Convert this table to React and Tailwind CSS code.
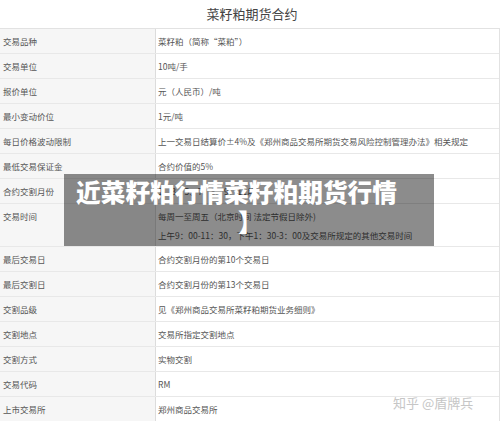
const rows = [
    { label: "交易品种", value: ["菜籽粕（简称“菜粕”）"] },
    { label: "交易单位", value: ["10吨/手"] },
    { label: "报价单位", value: ["元（人民币）/吨"] },
    { label: "最小变动价位", value: ["1元/吨"] },
    {
        label: "每日价格波动限制",
        value: ["上一交易日结算价±4%及《郑州商品交易所期货交易风险控制管理办法》相关规定"],
    },
    { label: "最低交易保证金", value: ["合约价值的5%"] },
    { label: "合约交割月份", value: ["1、3、5、7、8、9、11月"] },
    {
        label: "交易时间",
        value: [
            "每周一至周五（北京时间 法定节假日除外)",
            "上午9：00-11：30，下午1：30-3：00及交易所规定的其他交易时间",
        ],
        tall: true,
    },
    { label: "最后交易日", value: ["合约交割月份的第10个交易日"] },
    { label: "最后交割日", value: ["合约交割月份的第13个交易日"] },
    { label: "交割品级", value: ["见《郑州商品交易所菜籽粕期货业务细则》"] },
    { label: "交割地点", value: ["交易所指定交割地点"] },
    { label: "交割方式", value: ["实物交割"] },
    { label: "交易代码", value: ["RM"] },
    { label: "上市交易所", value: ["郑州商品交易所"] },
];

const font = { fontFamily: '"Noto Sans CJK SC", "Noto Sans", sans-serif' };

const Row = ({ row }) => (
    <div
        className={`grid grid-cols-[156px_1fr] border-b border-[#e8e8e8] ${
            row.tall ? "h-[43px]" : "h-[25px]"
        }`}
    >
        <div
            className={`bg-[#f6f6f6] border-r border-[#dcdcdc] pl-[3px] flex ${
                row.tall ? "items-start pt-[3px]" : "items-center"
            }`}
        >
            <span className="text-[8.5px] leading-[19px] text-[#555]">{row.label}</span>
        </div>
        <div
            className={`pl-[2px] flex flex-col ${
                row.tall ? "justify-start pt-[3px]" : "justify-center"
            }`}
        >
            {row.value.map((line) => (
                <span key={line} className="text-[8.5px] leading-[19px] text-[#555] whitespace-nowrap">
                    {line}
                </span>
            ))}
        </div>
    </div>
);

export default function App() {
    return (
        <div className="relative w-[500px] h-[421px] overflow-hidden bg-white" style={font}>
            {/* Title */}
            <div className="h-[28px] flex items-center justify-center pl-[4px] text-[13px] text-[#444]">
                菜籽粕期货合约
            </div>

            {/* Contract table */}
            <div className="border-t border-r border-[#e2e2e2]">
                {rows.map((row) => (
                    <Row key={row.label} row={row} />
                ))}
            </div>

            {/* Headline overlay */}
            <div className="absolute left-[64px] top-[174px] w-[370px] h-[72px] bg-black/45 pl-[12px] pt-[2px]">
                <p className="text-[24.7px] leading-[30px] font-black text-white whitespace-nowrap">
                    近菜籽粕行情菜籽粕期货行情
                </p>
                <p className="text-[24.7px] leading-[30px] font-black text-white pl-[162px]">】</p>
            </div>

            {/* Watermark */}
            <div className="absolute left-[393px] top-[394px] text-[13px] leading-[18px] text-[#c6c6c6] whitespace-nowrap">
                知乎 @盾牌兵
            </div>
        </div>
    );
}
